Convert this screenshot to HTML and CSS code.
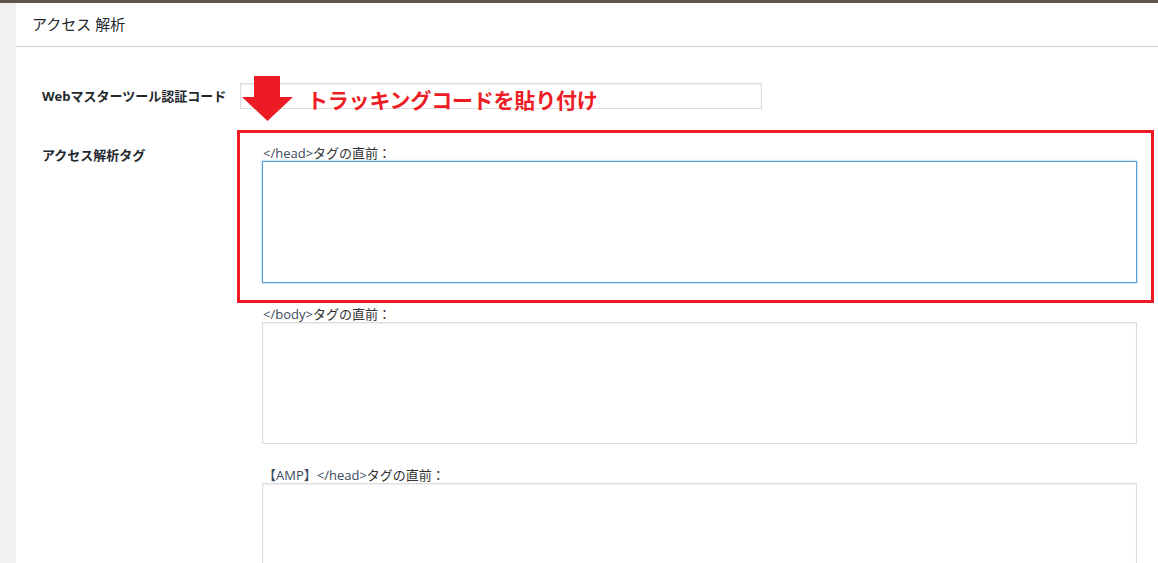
FILE: index.html
```html
<!DOCTYPE html>
<html lang="ja">
<head>
    <meta charset="UTF-8">
    <title>アクセス解析</title>
    <link rel="stylesheet" href="styles.css">
</head>
<body>
    <div class="topbar"></div>
    <div class="page">
        <div class="sidebar"></div>
        <main class="content">
            <h2 class="panel-title">アクセス 解析</h2>

            <div class="form-table">
                <div class="form-row row-verify">
                    <label class="row-label" for="verify">Webマスターツール認証コード</label>
                    <div class="row-field">
                        <input type="text" id="verify" class="text-input">
                        <svg class="note-arrow" width="51" height="45" viewBox="0 0 51 45">
                            <path d="M12 0H38V21H51L25.5 45L0 21H12Z" fill="#ed1c24"/>
                        </svg>
                        <span class="note-text">トラッキングコードを貼り付け</span>
                    </div>
                </div>

                <div class="form-row">
                    <div class="row-label">アクセス解析タグ</div>
                    <div class="row-field">
                        <div class="tag-group is-marked">
                            <label class="tag-label" for="head-tag"><span class="code">&lt;/head&gt;</span>タグの直前：</label>
                            <textarea id="head-tag" class="tag-area is-focus"></textarea>
                        </div>
                        <div class="tag-group">
                            <label class="tag-label" for="body-tag"><span class="code">&lt;/body&gt;</span>タグの直前：</label>
                            <textarea id="body-tag" class="tag-area"></textarea>
                        </div>
                        <div class="tag-group">
                            <label class="tag-label" for="amp-tag"><span class="code">【AMP】&lt;/head&gt;</span>タグの直前：</label>
                            <textarea id="amp-tag" class="tag-area"></textarea>
                        </div>
                    </div>
                </div>
            </div>
        </main>
    </div>
</body>
</html>
```

FILE: styles.css
```css
:root {
    --text-color: #23282d;
    --note-red: #ed1c24;
    --border-color: #dddddd;
}

* {
    box-sizing: border-box;
}

body {
    margin: 0;
    padding: 0;
    font-family: 'Open Sans', 'Noto Sans CJK JP', sans-serif;
    color: var(--text-color);
    background: #fff;
    overflow: hidden;
}

.topbar {
    height: 3px;
    background-color: #5d5550;
}

.page {
    display: flex;
    min-height: 560px;
}

.sidebar {
    width: 16px;
    flex-shrink: 0;
    background-color: #f1f1f1;
}

.content {
    flex: 1;
}

.panel-title {
    margin: 0;
    height: 44px;
    padding: 11px 0 0 16px;
    font-size: 15px;
    font-weight: normal;
    line-height: 20px;
    border-bottom: 1px solid #cfcfcf;
}

.form-table {
    padding-left: 26px;
}

.form-row {
    display: flex;
    margin-top: 36px;
}

.row-label {
    width: 198px;
    flex-shrink: 0;
    font-size: 13px;
    font-weight: bold;
    line-height: 20px;
}

.row-verify .row-label {
    align-self: center;
}

.row-field {
    position: relative;
    flex: 1;
}

.text-input {
    display: block;
    width: 522px;
    height: 26px;
    margin: 0;
    border: 1px solid var(--border-color);
    box-shadow: inset 0 1px 2px rgba(0, 0, 0, 0.07);
}

.note-arrow {
    position: absolute;
    left: 2px;
    top: -7px;
}

.note-text {
    position: absolute;
    left: 67px;
    top: 5px;
    font-size: 21px;
    font-weight: bold;
    line-height: 24px;
    color: var(--note-red);
    white-space: nowrap;
    letter-spacing: -0.2px;
    text-shadow: 0 0 2px #fff;
}

.tag-group {
    position: relative;
    padding-left: 22px;
    padding-right: 21px;
    margin-bottom: 23px;
}

.tag-group.is-marked::before {
    content: "";
    position: absolute;
    left: -3px;
    top: -15px;
    right: 4px;
    bottom: -20px;
    border: 3px solid var(--note-red);
    pointer-events: none;
}

.tag-label {
    display: block;
    font-size: 13px;
    line-height: 16px;
    color: #333;
    padding-left: 1px;
}

.code {
    color: #3b4a5e;
}

.tag-area {
    display: block;
    width: 100%;
    height: 122px;
    margin: 0;
    resize: none;
    border: 1px solid var(--border-color);
    box-shadow: inset 0 1px 2px rgba(0, 0, 0, 0.07);
}

.tag-area.is-focus {
    border-color: #5b9dd9;
    box-shadow: 0 0 2px rgba(30, 140, 190, 0.6);
}
```
